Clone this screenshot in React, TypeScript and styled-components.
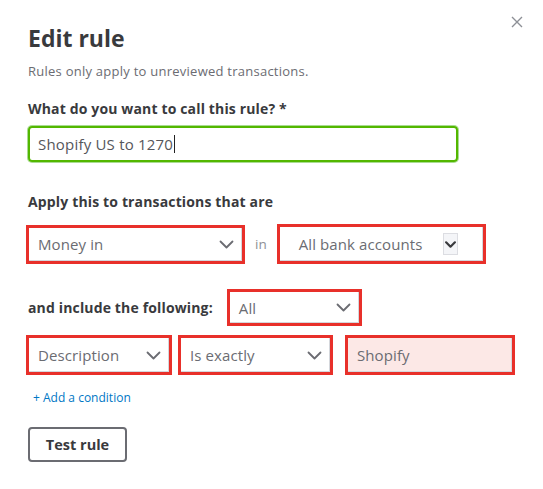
import React from "react";
import styled, { createGlobalStyle } from "styled-components";

const Global = createGlobalStyle`
  html, body { margin: 0; padding: 0; background: #fff; }
  body { font-family: "Open Sans", Lato, sans-serif; color: #393a3d; }
`;

const Panel = styled.div`
  position: relative;
  width: 543px;
  height: 489px;
  box-sizing: border-box;
  padding: 22px 0 0 28px;
  display: flex;
  flex-direction: column;
`;

const Close = styled.button`
  position: absolute;
  top: 14px;
  right: 18px;
  width: 16px;
  height: 16px;
  padding: 0;
  border: 0;
  background: none;
  display: flex;
  align-items: center;
  justify-content: center;
`;

const Title = styled.h1`
  margin: 0;
  font-size: 23px;
  line-height: 32px;
  font-weight: 700;
  color: #393a3d;
`;

const Sub = styled.p`
  margin: 9px 0 0;
  font-size: 13px;
  letter-spacing: 0.25px;
  line-height: 16px;
  color: #6b6c72;
`;

const Label = styled.div<{ $mt: number }>`
  margin-top: ${(p) => p.$mt}px;
  font-size: 14px;
  letter-spacing: 0.15px;
  line-height: 20px;
  font-weight: 700;
  color: #393a3d;
`;

const NameInput = styled.div`
  margin-top: 7px;
  width: 430px;
  height: 36px;
  box-sizing: border-box;
  border: 2px solid #53b700;
  box-shadow: 0 0 0 1px #a9dc93;
  border-radius: 4px;
  display: flex;
  align-items: center;
  padding-left: 8px;
  font-size: 15px;
  letter-spacing: 0.2px;
  color: #55565b;
`;

const Caret = styled.span`
  display: inline-block;
  width: 1px;
  height: 18px;
  background: #222;
  margin-left: 1px;
`;

const Row = styled.div<{ $mt: number; $gap?: number }>`
  margin-top: ${(p) => p.$mt}px;
  display: flex;
  align-items: center;
  gap: ${(p) => p.$gap ?? 6}px;
`;

const Marked = styled.div<{ $w: number; $h: number; $bg?: string }>`
  width: ${(p) => p.$w}px;
  height: ${(p) => p.$h}px;
  box-sizing: border-box;
  border: 3px solid #e8302a;
  background: ${(p) => p.$bg ?? "#fff"};
  box-shadow: inset -1px -1px 0 #d4d7dc;
  display: flex;
  align-items: center;
  justify-content: space-between;
  padding: 0 8px 0 9px;
  font-size: 15px;
  letter-spacing: 0.1px;
  color: #6b6c72;
`;

const InField = styled.span`
  font-size: 13.5px;
  color: #8d9096;
  margin: 0 4px;
`;

const ChevBox = styled.span`
  width: 15px;
  height: 22px;
  box-sizing: border-box;
  background: #f4f5f8;
  border: 1px solid #dcdde2;
  display: flex;
  align-items: center;
  justify-content: center;
`;

const AddLink = styled.a`
  margin-top: 15px;
  margin-left: 5px;
  font-size: 12px;
  line-height: 16px;
  color: #0077c5;
  text-decoration: none;
`;

const TestButton = styled.button`
  margin-top: 21px;
  width: 99px;
  height: 35px;
  box-sizing: border-box;
  border: 2px solid #6b6c72;
  border-radius: 4px;
  background: #fff;
  font-family: inherit;
  font-size: 14.5px;
  font-weight: 700;
  color: #393a3d;
`;

const Chevron = ({ bold }: { bold?: boolean }) => (
  <svg width={bold ? 11 : 15} height={bold ? 7 : 9} viewBox="0 0 15 9" fill="none">
    <path
      d="M1.5 1.5 L7.5 7.5 L13.5 1.5"
      stroke={bold ? "#393a3d" : "#6b6c72"}
      strokeWidth={bold ? 3 : 1.8}
      strokeLinecap="round"
      strokeLinejoin="round"
    />
  </svg>
);

export default function App() {
  return (
    <>
      <Global />
      <Panel>
        <Close aria-label="Close">
          <svg width="12" height="12" viewBox="0 0 12 12">
            <path d="M1 1 L11 11 M11 1 L1 11" stroke="#8d9096" strokeWidth="1.4" />
          </svg>
        </Close>
        <Title>Edit rule</Title>
        <Sub>Rules only apply to unreviewed transactions.</Sub>
        <Label $mt={20}>What do you want to call this rule? *</Label>
        <NameInput>
          Shopify US to 1270<Caret />
        </NameInput>
        <Label $mt={30}>Apply this to transactions that are</Label>
        <Row $mt={12} $gap={6}>
          <Marked $w={219} $h={39} style={{ marginLeft: -2 }}>
            Money in <Chevron />
          </Marked>
          <InField>in</InField>
          <Marked $w={209} $h={40} style={{ paddingLeft: 19, paddingRight: 25 }}>
            All bank accounts <ChevBox><Chevron bold /></ChevBox>
          </Marked>
        </Row>
        <Row $mt={25} $gap={14}>
          <Label $mt={0}>and include the following:</Label>
          <Marked $w={135} $h={37}>
            All <Chevron />
          </Marked>
        </Row>
        <Row $mt={9} $gap={6}>
          <Marked $w={146} $h={40} style={{ marginLeft: -2 }}>
            Description <Chevron />
          </Marked>
          <Marked $w={155} $h={40}>
            Is exactly <Chevron />
          </Marked>
          <Marked $w={170} $h={40} $bg="#fce8e6" style={{ marginLeft: 6 }}>
            Shopify
          </Marked>
        </Row>
        <AddLink href="#">+ Add a condition</AddLink>
        <TestButton>Test rule</TestButton>
      </Panel>
    </>
  );
}
